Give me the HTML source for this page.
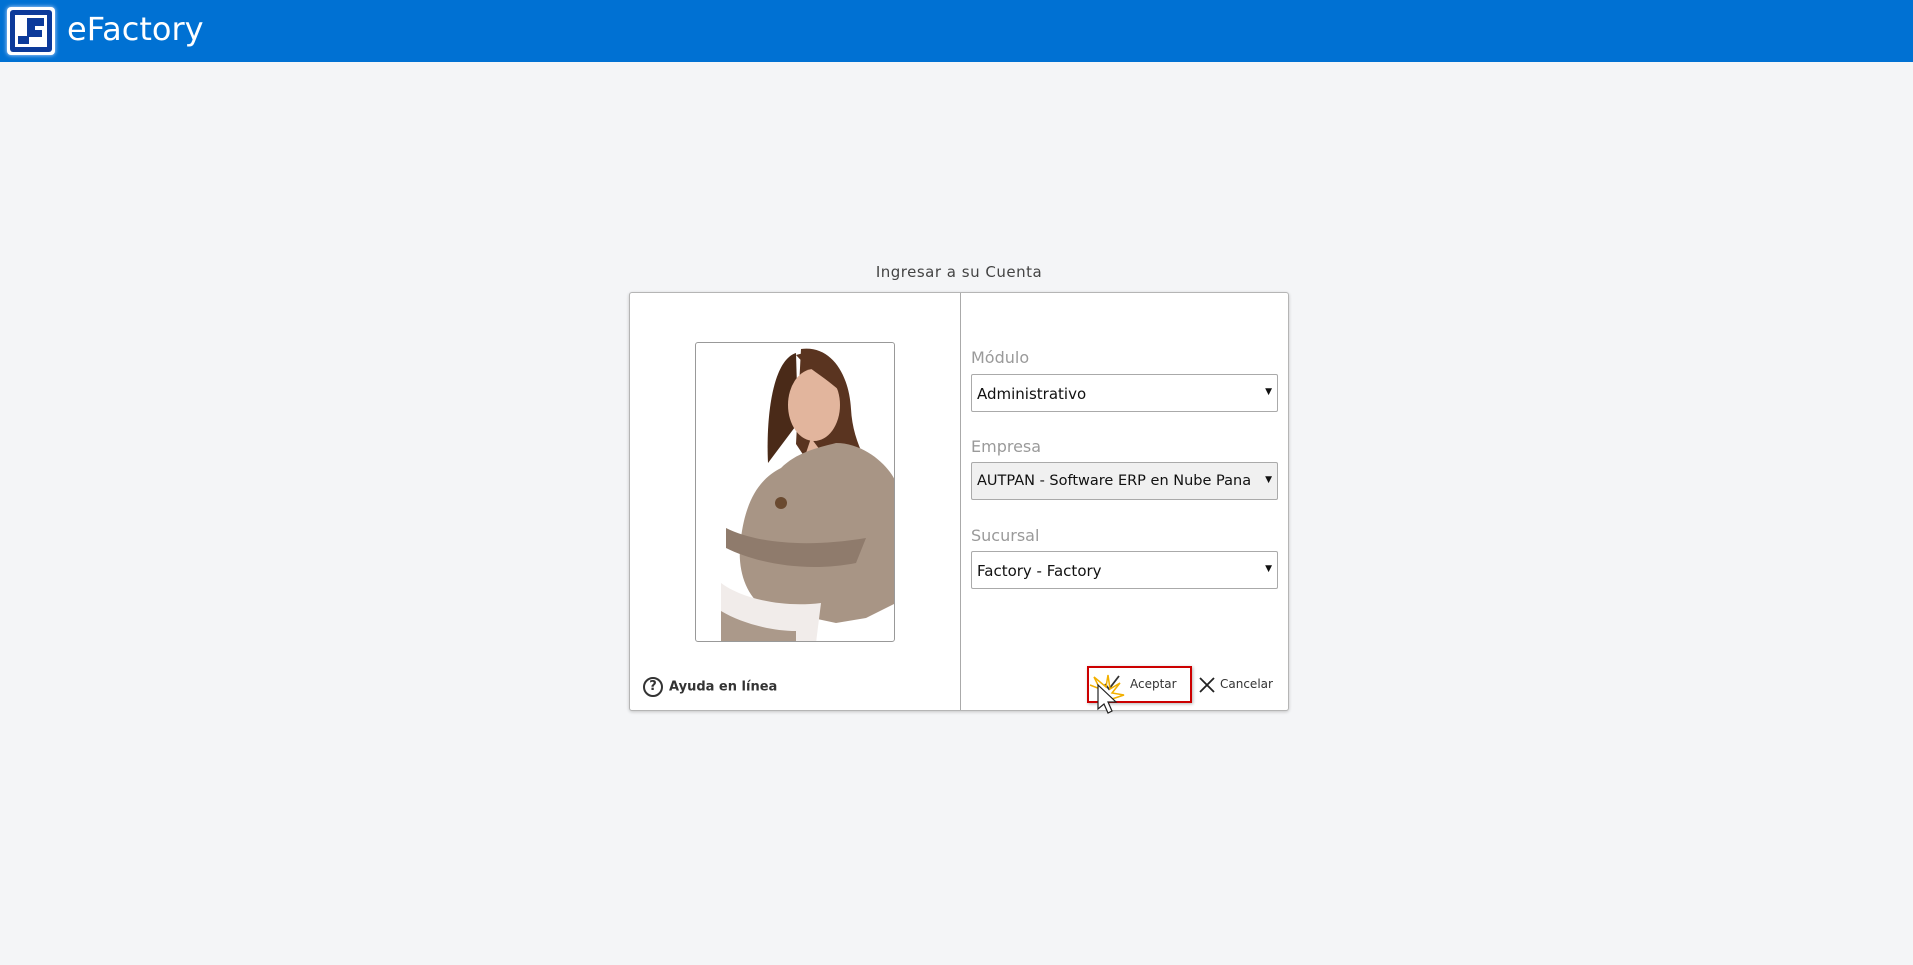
<!DOCTYPE html>
<html><head><meta charset="utf-8"><style>
*{margin:0;padding:0;box-sizing:border-box}
body{width:1913px;height:965px;background:#f4f5f7;font-family:"DejaVu Sans","Liberation Sans",sans-serif;position:relative;overflow:hidden}
.hdr{position:absolute;left:0;top:0;width:1913px;height:62px;background:#0071d3}
.logo{position:absolute;left:7px;top:7px;width:48px;height:48px;background:#fff;border-radius:4px;box-shadow:0 0 4px #cfe0ff}
.logo .in{position:absolute;left:3px;top:3px;width:42px;height:42px;background:#0c3a9a;border-radius:3px}
.logo .w{position:absolute;left:5px;top:5px;width:32px;height:32px;background:#fff}
.ttl{position:absolute;left:67px;top:10px;color:#fff;font-size:32px;font-family:"DejaVu Sans",sans-serif}
.title{position:absolute;left:629px;width:660px;top:263px;text-align:center;font-size:15px;color:#444;letter-spacing:.5px}
.panel{position:absolute;left:629px;top:292px;width:660px;height:419px;background:#fff;border:1px solid #b5b5b5;border-radius:3px;box-shadow:0 1px 3px rgba(0,0,0,.2)}
.div{position:absolute;left:330px;top:0;width:1px;height:417px;background:#aaa}
.photo{position:absolute;left:65px;top:49px;width:200px;height:300px;border:1px solid #999;border-radius:3px;overflow:hidden;background:#fff}
.lbl{position:absolute;left:341px;font-size:16px;color:#9a9a9a}
.sel{position:absolute;left:341px;width:307px;height:38px;border:1px solid #aaa;border-radius:2px;background:#fff;font-size:15px;color:#111;padding:10px 0 0 5px;white-space:nowrap;overflow:hidden}
.sel span{display:block;width:285px;overflow:hidden}
.sel:after{content:"▼";position:absolute;right:5px;top:12px;font-size:9px}
.help{position:absolute;left:13px;top:384px;font-size:13px;font-weight:bold;color:#333}
.help span.c{display:inline-block;width:20px;height:20px;border:2px solid #333;border-radius:50%;text-align:center;line-height:16px;font-size:13px;margin-right:6px;vertical-align:middle}
.acc{position:absolute;left:457px;top:373px;width:105px;height:37px;border:2px solid #c00;box-shadow:1px 1px 3px rgba(0,0,0,.3)}
.btxt{position:absolute;font-size:12px;color:#333}
</style></head><body>
<div class="hdr"><div class="logo"><div class="in"><div class="w">
<svg width="32" height="32" viewBox="0 0 32 32"><path d="M12 3h17v8H20v4h7v7H14v7H3v-8h9z" fill="#0c3a9a"/></svg></div></div></div>
<div class="ttl">eFactory</div></div>
<div class="title">Ingresar a su Cuenta</div>
<div class="panel">
<div class="div"></div>
<div class="photo"><svg width="200" height="300" viewBox="0 0 200 300">
<path d="M105 6c30-4 48 25 50 60 2 40 25 70 45 95v30l-60-30-40-60z" fill="#5a3420"/>
<path d="M100 10c-25 8-30 70-28 110l30-40z" fill="#4a2a18"/>
<ellipse cx="118" cy="62" rx="26" ry="36" fill="#e2b59d"/>
<path d="M100 12c25-8 50 12 48 40-18-18-35-25-48-40z" fill="#5a3420"/>
<path d="M115 95l-10 30 25-10z" fill="#e2b59d"/>
<path d="M85 125c15-15 35-20 55-25 30 0 55 25 60 40v120l-30 15-30 5-70-15c-20-10-30-40-25-70 5-40 20-60 40-70z" fill="#a89585"/>
<path d="M30 185c30 15 80 20 140 10l-10 25c-50 10-100 0-130-15z" fill="#8f7b6c"/>
<path d="M25 240c20 15 60 25 100 20l-5 40H25z" fill="#f1ecea"/>
<path d="M25 268c20 12 50 20 75 20v12H25z" fill="#ab998a"/>
<circle cx="85" cy="160" r="6" fill="#6a4a30"/>
</svg></div>
<div class="lbl" style="top:55px">Módulo</div>
<div class="sel" style="top:81px"><span>Administrativo</span></div>
<div class="lbl" style="top:144px">Empresa</div>
<div class="sel" style="top:169px;background:#f0f0f0;font-size:14.5px"><span>AUTPAN - Software ERP en Nube Pana</span></div>
<div class="lbl" style="top:233px">Sucursal</div>
<div class="sel" style="top:258px"><span>Factory - Factory</span></div>
<div class="help"><span class="c">?</span>Ayuda en línea</div>
<div class="acc"></div>
<svg style="position:absolute;left:472px;top:380px" width="20" height="20" viewBox="0 0 20 20"><path d="M3 11l4 5L17 3" fill="none" stroke="#333" stroke-width="1.8"/></svg>
<div class="btxt" style="left:500px;top:384px">Aceptar</div>
<svg style="position:absolute;left:568px;top:383px" width="18" height="18" viewBox="0 0 18 18"><path d="M2 2l14 14M16 2L2 16" stroke="#222" stroke-width="1.8"/></svg>
<div class="btxt" style="left:590px;top:384px">Cancelar</div>
<svg style="position:absolute;left:456px;top:378px" width="40" height="50" viewBox="0 0 40 50"><path d="M4 14l10 4-6-12 12 10 2-12 2 14 10-6-8 10 12 2-12 4" fill="none" stroke="#f2b000" stroke-width="1.5"/><path d="M12 14v24l6-5 4 9 4-2-4-9h8z" fill="#fff" stroke="#222" stroke-width="1.2"/></svg>
</div>
</body></html>
